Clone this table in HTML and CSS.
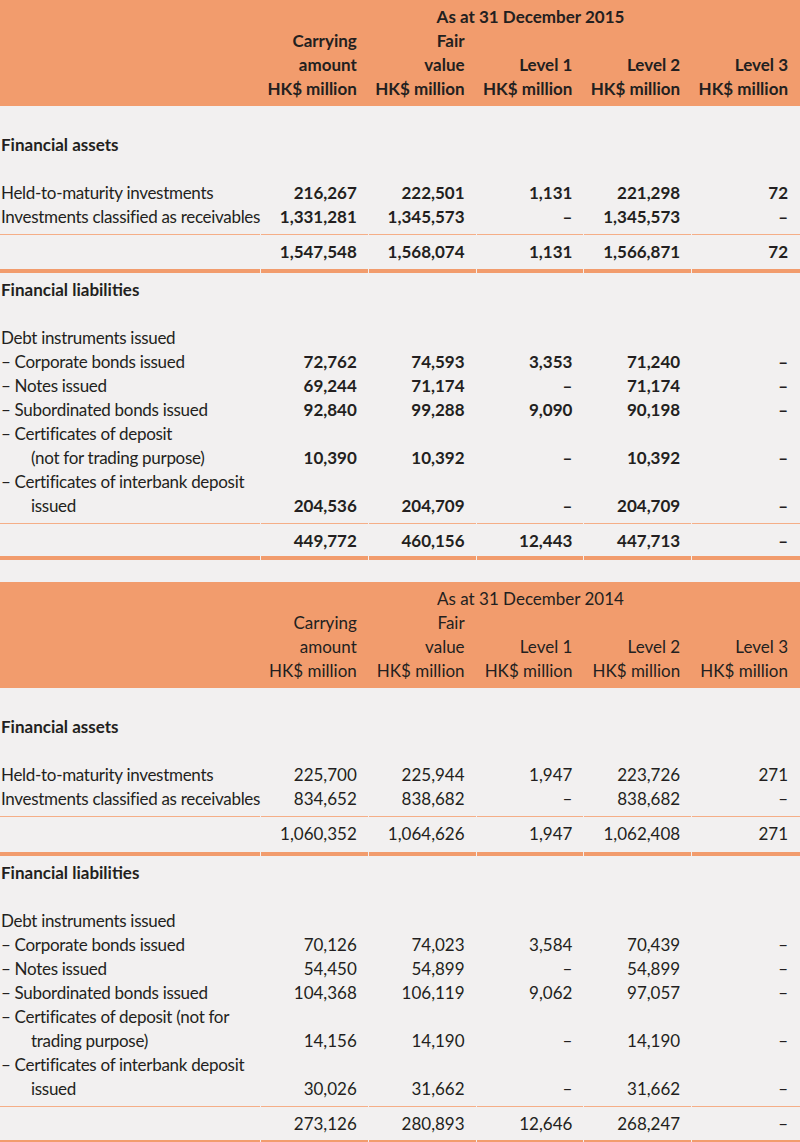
FILE: index.html
```html
<!DOCTYPE html>
<html lang="en">
<head>
<meta charset="utf-8">
<title>Fair value of financial instruments</title>
<link rel="stylesheet" href="styles.css">
</head>
<body>
<table class="fv bold">
  <colgroup><col class="c-lbl"><col><col><col><col><col></colgroup>
  <thead>
    <tr class="h-first"><th></th><th colspan="5" class="period">As at 31 December 2015</th></tr>
    <tr><th></th><th>Carrying</th><th>Fair</th><th></th><th></th><th></th></tr>
    <tr><th></th><th>amount</th><th>value</th><th>Level 1</th><th>Level 2</th><th>Level 3</th></tr>
    <tr class="h-last"><th></th><th>HK$ million</th><th>HK$ million</th><th>HK$ million</th><th>HK$ million</th><th>HK$ million</th></tr>
  </thead>
  <tbody>
    <tr class="sec sec-first"><td colspan="6">Financial assets</td></tr>
    <tr><td class="lbl">Held-to-maturity investments</td><td>216,267</td><td>222,501</td><td>1,131</td><td>221,298</td><td>72</td></tr>
    <tr><td class="lbl">Investments classified as receivables</td><td>1,331,281</td><td>1,345,573</td><td>–</td><td>1,345,573</td><td>–</td></tr>
    <tr class="tot pb9"><td></td><td>1,547,548</td><td>1,568,074</td><td>1,131</td><td>1,566,871</td><td>72</td></tr>
    <tr class="sec"><td colspan="6">Financial liabilities</td></tr>
    <tr><td class="lbl" colspan="6">Debt instruments issued</td></tr>
    <tr><td class="lbl">– Corporate bonds issued</td><td>72,762</td><td>74,593</td><td>3,353</td><td>71,240</td><td>–</td></tr>
    <tr><td class="lbl">– Notes issued</td><td>69,244</td><td>71,174</td><td>–</td><td>71,174</td><td>–</td></tr>
    <tr><td class="lbl">– Subordinated bonds issued</td><td>92,840</td><td>99,288</td><td>9,090</td><td>90,198</td><td>–</td></tr>
    <tr><td class="lbl">– Certificates of deposit<span class="ind">(not for trading purpose)</span></td><td>10,390</td><td>10,392</td><td>–</td><td>10,392</td><td>–</td></tr>
    <tr><td class="lbl">– Certificates of interbank deposit<span class="ind">issued</span></td><td>204,536</td><td>204,709</td><td>–</td><td>204,709</td><td>–</td></tr>
    <tr class="tot pb7"><td></td><td>449,772</td><td>460,156</td><td>12,443</td><td>447,713</td><td>–</td></tr>
  </tbody>
</table>

<table class="fv second">
  <colgroup><col class="c-lbl"><col><col><col><col><col></colgroup>
  <thead>
    <tr class="h-first"><th></th><th colspan="5" class="period">As at 31 December 2014</th></tr>
    <tr><th></th><th>Carrying</th><th>Fair</th><th></th><th></th><th></th></tr>
    <tr><th></th><th>amount</th><th>value</th><th>Level 1</th><th>Level 2</th><th>Level 3</th></tr>
    <tr class="h-last"><th></th><th>HK$ million</th><th>HK$ million</th><th>HK$ million</th><th>HK$ million</th><th>HK$ million</th></tr>
  </thead>
  <tbody>
    <tr class="sec sec-first"><td colspan="6">Financial assets</td></tr>
    <tr><td class="lbl">Held-to-maturity investments</td><td>225,700</td><td>225,944</td><td>1,947</td><td>223,726</td><td>271</td></tr>
    <tr><td class="lbl">Investments classified as receivables</td><td>834,652</td><td>838,682</td><td>–</td><td>838,682</td><td>–</td></tr>
    <tr class="tot pb10"><td></td><td>1,060,352</td><td>1,064,626</td><td>1,947</td><td>1,062,408</td><td>271</td></tr>
    <tr class="sec"><td colspan="6">Financial liabilities</td></tr>
    <tr><td class="lbl" colspan="6">Debt instruments issued</td></tr>
    <tr><td class="lbl">– Corporate bonds issued</td><td>70,126</td><td>74,023</td><td>3,584</td><td>70,439</td><td>–</td></tr>
    <tr><td class="lbl">– Notes issued</td><td>54,450</td><td>54,899</td><td>–</td><td>54,899</td><td>–</td></tr>
    <tr><td class="lbl">– Subordinated bonds issued</td><td>104,368</td><td>106,119</td><td>9,062</td><td>97,057</td><td>–</td></tr>
    <tr><td class="lbl">– Certificates of deposit (not for<span class="ind">trading purpose)</span></td><td>14,156</td><td>14,190</td><td>–</td><td>14,190</td><td>–</td></tr>
    <tr><td class="lbl">– Certificates of interbank deposit<span class="ind">issued</span></td><td>30,026</td><td>31,662</td><td>–</td><td>31,662</td><td>–</td></tr>
    <tr class="tot pb8"><td></td><td>273,126</td><td>280,893</td><td>12,646</td><td>268,247</td><td>–</td></tr>
  </tbody>
</table>
</body>
</html>
```

FILE: styles.css
```css
:root {
  --orange: #f29c6d;
  --orange-thin: #f5ae87;
  --ink: #231f20;
  --paper: #f2f0f0;
}

html, body {
  margin: 0;
  padding: 0;
  background: var(--paper);
}

body {
  font-family: Lato, "Liberation Sans", sans-serif;
  font-size: 17px;
  color: var(--ink);
}

.fv {
  width: 800px;
  table-layout: fixed;
  border-collapse: separate;
  border-spacing: 0;
}

.fv.second {
  margin-top: 22px;
}

.c-lbl {
  width: 261px;
}

.fv th,
.fv td {
  padding: 0 12px 0 0;
  line-height: 24px;
  height: 24px;
  text-align: right;
  white-space: nowrap;
  vertical-align: bottom;
}

.fv th {
  background: var(--orange);
  font-weight: inherit;
}

.fv.bold th,
.fv.bold td {
  font-weight: 700;
}

.fv .h-first th {
  padding-top: 5px;
}

.fv .h-last th {
  padding-bottom: 5px;
}

.fv th.period {
  text-align: center;
  padding-right: 0;
}

.fv td.lbl {
  text-align: left;
  padding-left: 1px;
  font-weight: 400;
  letter-spacing: -0.3px;
}

.fv td.lbl .ind {
  display: block;
  padding-left: 30px;
}

.fv .sec td {
  text-align: left;
  padding: 5px 0 24px 1px;
  font-weight: 700;
}

.fv .sec.sec-first td {
  padding-top: 27px;
}

.fv .tot td {
  padding-top: 11px;
  padding-bottom: 8px;
  background-image:
    linear-gradient(var(--orange-thin), var(--orange-thin)),
    linear-gradient(var(--orange), var(--orange));
  background-repeat: no-repeat;
  background-size: calc(100% - 1px) 1px, calc(100% - 1px) 4px;
  background-position: left 5px, left bottom;
}

.fv .tot td:last-child {
  background-size: 100% 1px, 100% 4px;
}

.fv .tot.pb7 td { padding-bottom: 7px; }
.fv .tot.pb8 td { padding-bottom: 8px; }
.fv .tot.pb9 td { padding-bottom: 9px; }
.fv .tot.pb10 td { padding-bottom: 10px; }
```
